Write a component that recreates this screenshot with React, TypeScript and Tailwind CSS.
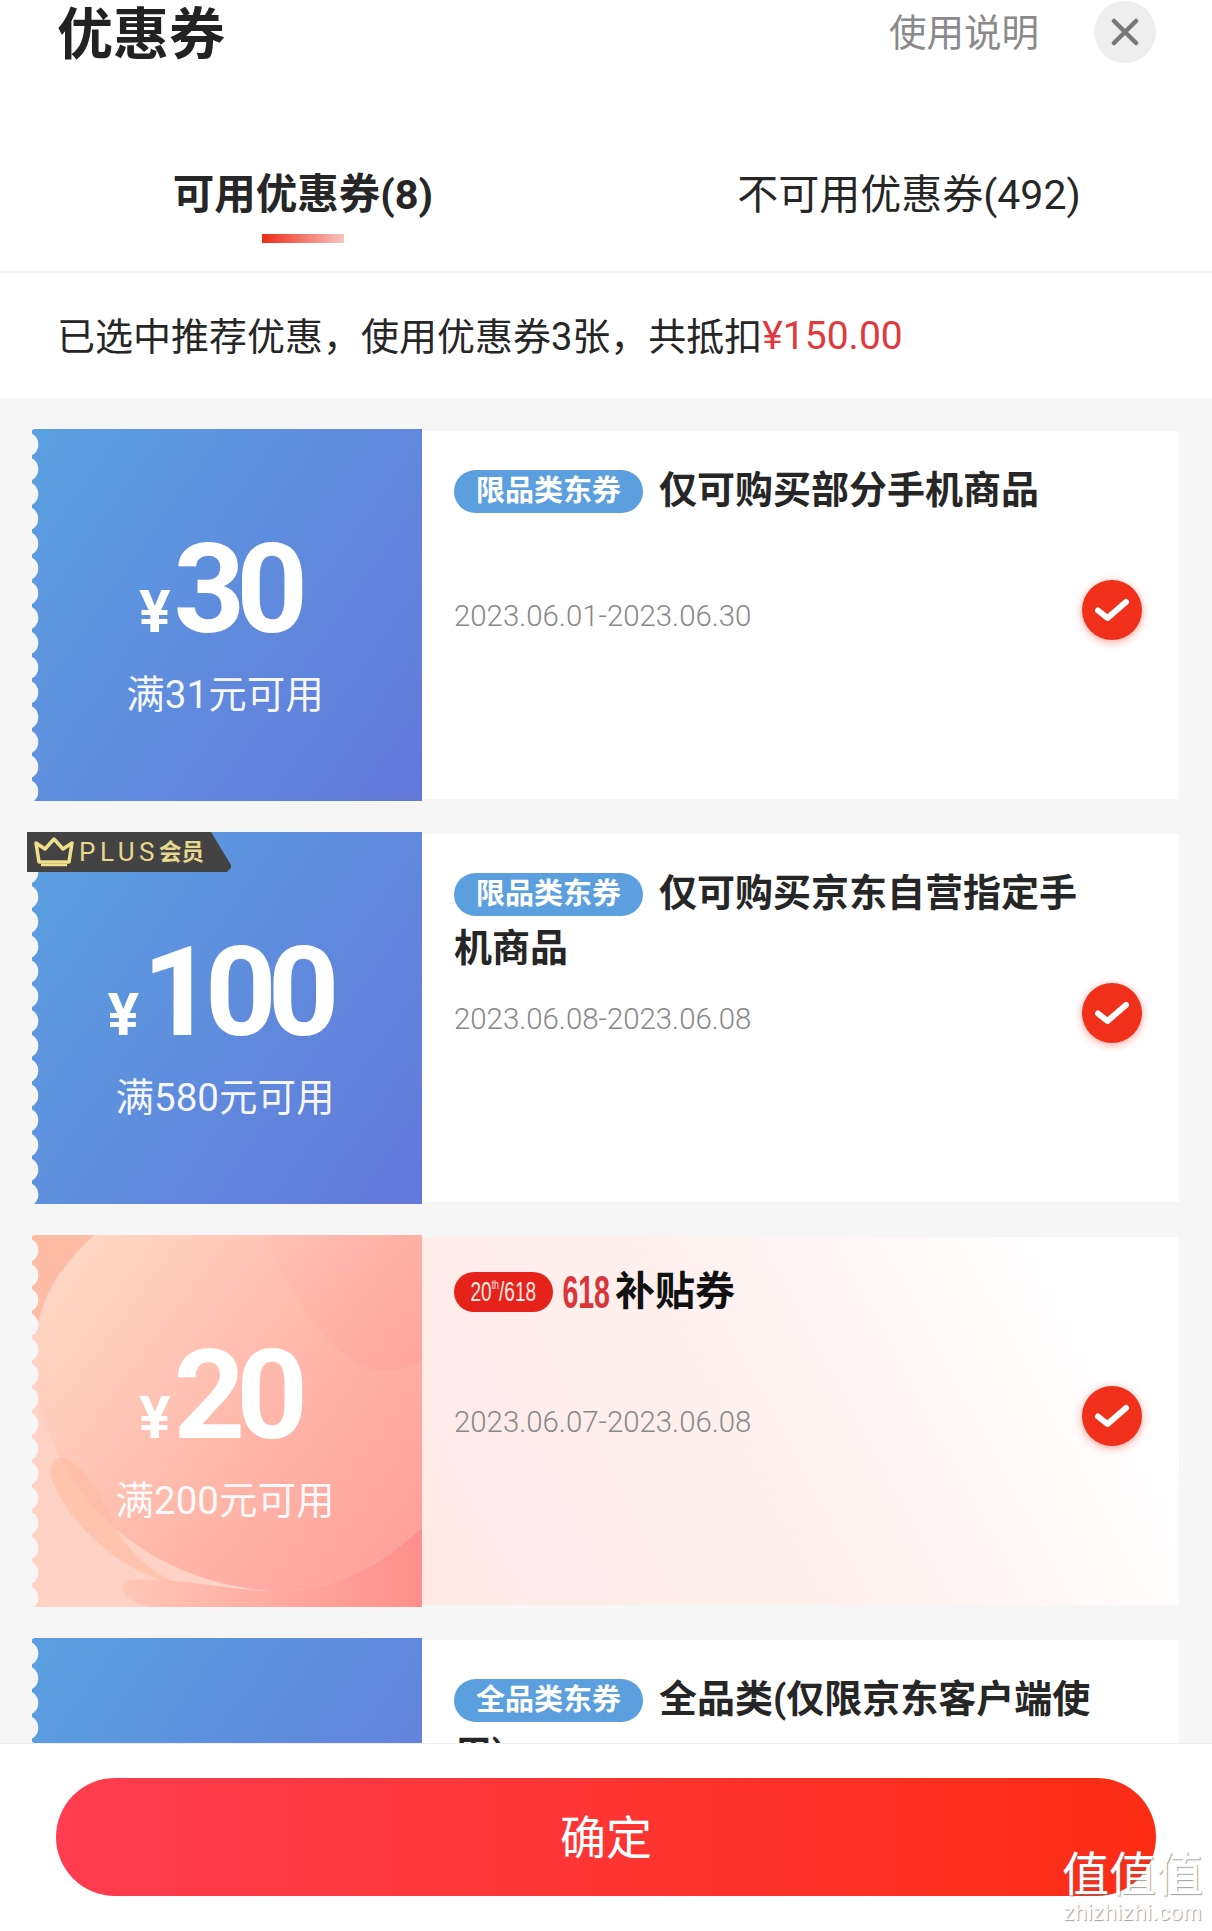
const cjk = "font-['Roboto','Noto_Sans_CJK_SC',sans-serif]";

function Check() {
  return (
    <div className="absolute right-[37px] top-[149px] flex h-[60px] w-[60px] items-center justify-center rounded-full bg-[#f0301a] shadow-[0_2px_8px_rgba(240,48,26,0.45)]">
      <svg width="38" height="30" viewBox="0 0 38 30" fill="none">
        <path d="M5 15.5 L14.5 23 L33 7" stroke="#fff" strokeWidth="6" strokeLinecap="round" strokeLinejoin="round" />
      </svg>
    </div>
  );
}

function Chip({ label }: { label: string }) {
  return (
    <span className="relative top-[-6px] mr-[16px] inline-flex h-[43px] w-[189px] items-center justify-center rounded-full bg-[#5b9fde] align-[-4px] text-[29px] leading-none font-bold text-white">
      {label}
    </span>
  );
}

function PlusTag() {
  return (
    <div className="absolute top-0 left-[-5px] z-10 flex h-[40px] w-[204px] items-center bg-[#434343] pl-[6px] [clip-path:polygon(0_0,184px_0,204px_33px,204px_36px,200px_40px,0_40px)]">
      <svg width="42" height="32" viewBox="0 0 42 32" fill="none">
        <path d="M6 26 L3 7 L12 13 L21 3 L30 13 L39 7 L36 26 Z" stroke="#f0e08c" strokeWidth="3.5" strokeLinejoin="round" />
        <path d="M8 29 H34" stroke="#f0e08c" strokeWidth="2.5" />
      </svg>
      <span className="ml-[4px] text-[26px] leading-none tracking-[4.5px] text-[#e6d88e]">PLUS</span>
      <span className="text-[22.5px] leading-none font-bold text-[#e6d88e]">会员</span>
    </div>
  );
}

function Peach() {
  return (
    <svg className="absolute inset-0 h-full w-full" viewBox="0 0 390 372" preserveAspectRatio="none">
      <defs>
        <linearGradient id="base" gradientUnits="userSpaceOnUse" x1="40" y1="40" x2="390" y2="300">
          <stop offset="0" stopColor="#ffd6c3" />
          <stop offset="0.5" stopColor="#ffb9ab" />
          <stop offset="1" stopColor="#ffa09b" />
        </linearGradient>
        <linearGradient id="low" gradientUnits="userSpaceOnUse" x1="90" y1="350" x2="390" y2="340">
          <stop offset="0" stopColor="#ffc7b8" />
          <stop offset="1" stopColor="#ff8f8b" />
        </linearGradient>
        <linearGradient id="top" gradientUnits="userSpaceOnUse" x1="230" y1="0" x2="390" y2="130">
          <stop offset="0" stopColor="#ffbeb1" />
          <stop offset="1" stopColor="#ff9a95" />
        </linearGradient>
      </defs>
      <rect width="390" height="372" fill="#ffd2c5" />
      <path d="M95 345C150 342 190 355 240 356C310 358 360 320 390 292V372H120C95 368 82 352 95 345Z" fill="url(#low)" />
      <path d="M62 0H390V292C360 320 310 358 240 356C90 345 0 230 5 120C8 70 30 30 62 0Z" fill="url(#base)" />
      <path d="M0 0H62C35 25 15 50 7 85L0 90Z" fill="#ffbca5" />
      <path d="M230 0C250 35 270 85 310 118C335 140 360 140 390 125V0Z" fill="url(#top)" opacity="0.4" />
      <path d="M28 222C50 225 70 260 85 295C100 320 125 342 150 350C105 345 40 300 18 240C18 230 22 224 28 222Z" fill="#ffbb9f" opacity="0.6" />
    </svg>
  );
}

function Amount({ value, min, peach }: { value?: string; min?: string; peach?: boolean }) {
  return (
    <div
      className={`relative h-[372px] w-[390px] shrink-0 overflow-hidden ${
        peach ? "bg-[#ffcdbf]" : "bg-[linear-gradient(125deg,#5aa0e0,#6478da)]"
      }`}
    >
      {peach && <Peach />}
      <div className="absolute inset-y-0 left-0 w-[7px] bg-[radial-gradient(circle_at_-6px_50%,#f6f6f6_12px,transparent_12.7px)] bg-[length:7px_24.8px] bg-[position:0_3px]" />
      {value && (
        <div className="relative flex h-full flex-col items-center pt-[98px] pr-[4px]">
          <div className="flex h-[125px] items-baseline justify-center pr-[12px] font-['Roboto',sans-serif] font-bold text-white">
            <span className="mr-[3px] text-[59px] leading-none">¥</span>
            <span className="text-[125px] leading-[125px] tracking-[-9px]">{value}</span>
          </div>
          <div className="mt-[15px] text-[38.5px] leading-[56px] text-white/95">{min}</div>
        </div>
      )}
    </div>
  );
}

function Row({
  value,
  min,
  date,
  peach,
  tag,
  children,
}: {
  value?: string;
  min?: string;
  date?: string;
  peach?: boolean;
  tag?: boolean;
  children: React.ReactNode;
}) {
  return (
    <div className="relative flex h-[372px] shrink-0">
      {tag && <PlusTag />}
      <Amount value={value} min={min} peach={peach} />
      <div
        className={`relative my-[2px] flex-1 pt-[33px] pl-[32px] ${
          peach ? "bg-[linear-gradient(62deg,#ffe9e7_0%,#fff0ee_42%,#ffffff_88%)]" : "bg-white"
        }`}
      >
        <div className="h-[106px] w-[640px] text-[38px] leading-[53px] font-bold text-[#262626]">{children}</div>
        {date && <div className="mt-[23px] text-[29.4px] leading-[46px] font-light text-[#888888]">{date}</div>}
        {date && <Check />}
      </div>
    </div>
  );
}

export default function App() {
  return (
    <div className={`flex h-[1931px] w-[1212px] flex-col overflow-hidden bg-white ${cjk}`}>
      <div className="flex h-[64px] shrink-0 items-center justify-between pr-[56px] pl-[57px]">
        <div className="pt-[6px] text-[56px] leading-none font-bold text-[#222]">优惠券</div>
        <div className="flex items-center gap-[55px]">
          <span className="pt-[4px] text-[37.5px] leading-none text-[#8a8a8a]">使用说明</span>
          <div className="flex h-[62px] w-[62px] items-center justify-center rounded-full bg-[#eeeeee]">
            <svg width="28" height="28" viewBox="0 0 28 28" fill="none">
              <path d="M3 3L25 25M25 3L3 25" stroke="#777" strokeWidth="4.5" strokeLinecap="round" />
            </svg>
          </div>
        </div>
      </div>

      <div className="grid h-[209px] shrink-0 grid-cols-2 border-b-2 border-[#f3f3f3] pt-[103px]">
        <div className="flex flex-col items-center">
          <div className="text-[41.5px] leading-[56px] font-bold text-[#262626]">可用优惠券(8)</div>
          <div className="mt-[11px] h-[9px] w-[82px] bg-[linear-gradient(90deg,#ee2b16,#f8c5c0)]" />
        </div>
        <div className="text-center text-[41px] leading-[56px] text-[#262626]">不可用优惠券(492)</div>
      </div>

      <div className="flex h-[125px] shrink-0 items-center pt-[2px] pl-[57px] text-[38px] leading-none whitespace-nowrap text-[#262626]">
        已选中推荐优惠，使用优惠券3张，共抵扣<span className="text-[39px] text-[#e0393e]">¥150.00</span>
      </div>

      <div className="flex min-h-0 flex-1 flex-col gap-[31px] overflow-hidden bg-[#f6f6f6] pt-[31px] pr-[33px] pl-[32px]">
        <Row value="30" min="满31元可用" date="2023.06.01-2023.06.30">
          <Chip label="限品类东券" />
          仅可购买部分手机商品
        </Row>
        <Row value="100" min="满580元可用" date="2023.06.08-2023.06.08" tag>
          <Chip label="限品类东券" />
          仅可购买京东自营指定手机商品
        </Row>
        <Row value="20" min="满200元可用" date="2023.06.07-2023.06.08" peach>
          <div className="flex h-[53px] -translate-y-[5px] items-center">
            <span className="flex h-[40px] w-[99px] items-center justify-center rounded-full bg-[#e5231b] font-['Liberation_Sans',sans-serif] leading-none font-normal text-[#ffe9e4]">
              <span className="inline-flex scale-x-[0.68] items-start text-[28px]">
                20<span className="text-[13px]">th</span>/618
              </span>
            </span>
            <span className="ml-[-2px] inline-block w-[60px] origin-center scale-x-[0.62] text-center font-['Liberation_Sans',sans-serif] text-[46px] leading-none font-bold text-[#d9363a]">
              618
            </span>
            <span className="ml-[4px] text-[40px] leading-none text-[#111]">补贴券</span>
          </div>
        </Row>
        <Row>
          <Chip label="全品类东券" />
          全品类(仅限京东客户端使用)
        </Row>
      </div>

      <div className="relative flex h-[188px] shrink-0 items-center justify-center border-t border-[#eeeeee] bg-white pb-[2px]">
        <button className="flex h-[118px] w-[1100px] items-center justify-center rounded-full bg-[linear-gradient(90deg,#ff3d50,#fc2c14)] pt-[4px] text-[46px] text-white">
          确定
        </button>
        <div className="absolute top-[104px] right-[9px] flex flex-col items-center text-white [text-shadow:1px_1px_1px_rgba(120,120,120,0.7)]">
          <span className="text-[47px] leading-[54px]">值值值</span>
          <span className="font-['Liberation_Sans',sans-serif] text-[22px] leading-[22px] tracking-[0.5px]">zhizhizhi.com</span>
        </div>
      </div>
    </div>
  );
}
